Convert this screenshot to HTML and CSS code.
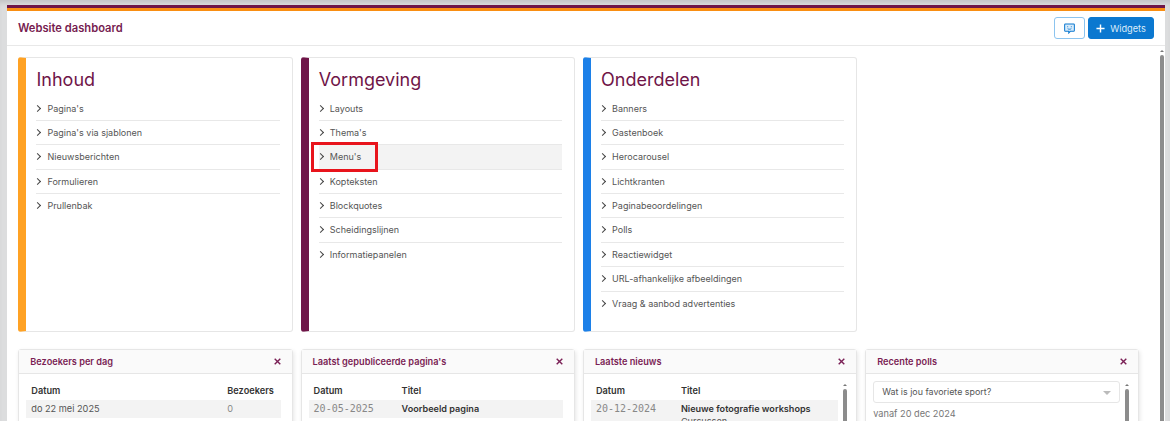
FILE: index.html
```html
<!DOCTYPE html>
<html>
<head>
    <title>Website dashboard</title>
    <link rel="stylesheet" href="styles.css">
</head>
<body>
<div class="shell">
    <div class="stripe-purple"></div>
    <div class="stripe-orange"></div>
    <header class="topbar">
        <h1>Website dashboard</h1>
        <div class="topbar-actions">
            <button class="btn-outline" type="button" aria-label="Feedback">
                <svg width="11" height="11" viewBox="0 0 12 12"><path d="M1.500 1h9a.8.8 0 0 1 .8.8v6.400a.8.8 0 0 1-.8.8H7L5.200 11V9H1.500a.8.8 0 0 1-.8-.8V1.800a.8.8 0 0 1 .8-.8z" fill="#d8ebfa" stroke="#0b78d0" stroke-width="1.100"/><path d="M4 3.600v1M8 3.600v1M4 6.200c1.200.8 2.800.8 4 0" fill="none" stroke="#0b78d0" stroke-width="1"/></svg>
            </button>
            <button class="btn-primary" type="button">
                <svg width="9" height="9" viewBox="0 0 10 10"><path d="M5 .5v9M.5 5h9" stroke="#fff" stroke-width="1.600" fill="none"/></svg>
                Widgets
            </button>
        </div>
    </header>
    <div class="main">
        <div class="content">
            <div class="menu-row">
                <section class="menu-card orange">
                    <h2>Inhoud</h2>
                    <ul>
                        <li>Pagina's</li>
                        <li>Pagina's via sjablonen</li>
                        <li>Nieuwsberichten</li>
                        <li>Formulieren</li>
                        <li>Prullenbak</li>
                    </ul>
                </section>
                <section class="menu-card purple">
                    <h2>Vormgeving</h2>
                    <ul>
                        <li>Layouts</li>
                        <li>Thema's</li>
                        <li class="active">Menu's<span class="marker"></span></li>
                        <li>Kopteksten</li>
                        <li>Blockquotes</li>
                        <li>Scheidingslijnen</li>
                        <li>Informatiepanelen</li>
                    </ul>
                </section>
                <section class="menu-card blue">
                    <h2>Onderdelen</h2>
                    <ul>
                        <li>Banners</li>
                        <li>Gastenboek</li>
                        <li>Herocarousel</li>
                        <li>Lichtkranten</li>
                        <li>Paginabeoordelingen</li>
                        <li>Polls</li>
                        <li>Reactiewidget</li>
                        <li>URL-afhankelijke afbeeldingen</li>
                        <li>Vraag &amp; aanbod advertenties</li>
                    </ul>
                </section>
            </div>
            <div class="widget-row">
                <section class="widget">
                    <div class="widget-head"><h3>Bezoekers per dag</h3><svg class="close" width="7" height="7" viewBox="0 0 7 7"><path d="M.7.7l5.600 5.600M6.300.7L.7 6.300"/></svg></div>
                    <div class="widget-body">
                        <div class="tr th"><span class="col-wide">Datum</span><span>Bezoekers</span></div>
                        <div class="tr shaded"><span class="col-wide">do 22 mei 2025</span><span class="col-count">0</span></div>
                    </div>
                </section>
                <section class="widget">
                    <div class="widget-head"><h3>Laatst gepubliceerde pagina's</h3><svg class="close" width="7" height="7" viewBox="0 0 7 7"><path d="M.7.7l5.600 5.600M6.300.7L.7 6.300"/></svg></div>
                    <div class="widget-body">
                        <div class="tr th"><span class="col-date-long">Datum</span><span>Titel</span></div>
                        <div class="tr shaded"><span class="col-date-long date">20-05-2025</span><strong>Voorbeeld pagina</strong></div>
                    </div>
                </section>
                <section class="widget">
                    <div class="widget-head"><h3>Laatste nieuws</h3><svg class="close" width="7" height="7" viewBox="0 0 7 7"><path d="M.7.7l5.600 5.600M6.300.7L.7 6.300"/></svg></div>
                    <div class="widget-body with-scroll">
                        <div class="scroll-col">
                            <div class="tr th"><span class="col-date">Datum</span><span>Titel</span></div>
                            <div class="tr shaded tall"><span class="col-date date">20-12-2024</span><div><strong>Nieuwe fotografie workshops</strong><div class="sub">Cursussen</div></div></div>
                        </div>
                        <div class="mini-scroll"></div>
                    </div>
                </section>
                <section class="widget">
                    <div class="widget-head"><h3>Recente polls</h3><svg class="close" width="7" height="7" viewBox="0 0 7 7"><path d="M.7.7l5.600 5.600M6.300.7L.7 6.300"/></svg></div>
                    <div class="widget-body with-scroll">
                        <div class="scroll-col">
                            <div class="select">Wat is jou favoriete sport?<span class="caret"></span></div>
                            <p class="since">vanaf 20 dec 2024</p>
                        </div>
                        <div class="mini-scroll"></div>
                    </div>
                </section>
            </div>
        </div>
        <div class="page-scroll"></div>
    </div>
</div>
</body>
</html>
```

FILE: styles.css
```css
html, body {
    margin: 0;
    height: 100%;
    overflow: hidden;
}
body {
    background: #dcddde;
    font-family: Inter, "Liberation Sans", sans-serif;
    font-size: 9px;
    color: #555;
    padding: 5px 5px 0 7px;
    box-sizing: border-box;
    box-shadow: inset 0 5px 4px -2px #c4c5c7;
}
.shell {
    background: #fff;
    height: 416px;
    overflow: hidden;
}
.stripe-purple {
    height: 3px;
    background: #6f1548;
}
.stripe-orange {
    height: 3px;
    background: #f98e12;
}
.topbar {
    height: 34px;
    border-bottom: 1px solid #e8e8e8;
    display: flex;
    align-items: center;
    justify-content: space-between;
    padding: 0 11px;
}
h1 {
    margin: 0;
    font-size: 11.200px;
    font-weight: 600;
    color: #761c50;
}
.topbar-actions {
    display: flex;
    gap: 3px;
}
button {
    height: 22px;
    border-radius: 3px;
    font-family: inherit;
    font-size: 9.200px;
    display: flex;
    align-items: center;
    justify-content: center;
    padding: 0;
}
.btn-outline {
    width: 31px;
    background: #fff;
    border: 1.500px solid #8cc4ef;
}
.btn-primary {
    width: 66px;
    gap: 5px;
    background: #0b78d0;
    border: 1px solid #0b78d0;
    color: #dcecf9;
}
.main {
    display: flex;
}
.content {
    flex: 1;
    padding: 11px 0 0 11.300px;
}
.page-scroll {
    position: relative;
    width: 4px;
    height: 370px;
    margin: 9px 1px 0 0;
    background: #8c8c8c;
    border-radius: 2px 2px 0 0;
}
.page-scroll::before, .mini-scroll::before {
    content: "";
    position: absolute;
    left: 0;
    top: -5px;
    border: 2px solid transparent;
    border-bottom: 2px solid #777;
    border-top: 0;
}
.menu-row, .widget-row {
    display: flex;
    gap: 8px;
}
.menu-card {
    width: 274.300px;
    height: 275px;
    box-sizing: border-box;
    border: 1px solid #e6e6e6;
    border-left-width: 8px;
    border-radius: 3px;
    padding: 0 12px 0 10.200px;
}
.menu-card.orange { border-left-color: #ffa224; }
.menu-card.purple { border-left-color: #6f1548; }
.menu-card.blue { border-left-color: #1c80e8; }
h2 {
    margin: 8px 0 3.500px;
    font-size: 18px;
    line-height: 27px;
    font-weight: 400;
    color: #6f1548;
}
ul {
    list-style: none;
    margin: 0;
    padding: 0;
}
li {
    position: relative;
    height: 24.375px;
    line-height: 24px;
    box-sizing: border-box;
    padding-left: 11px;
    border-bottom: 1px solid #e8e8e8;
}
li:last-child {
    border-bottom: 0;
}
li::before {
    content: "";
    position: absolute;
    left: -1px;
    top: 9px;
    width: 4px;
    height: 4px;
    border-top: 1px solid #444;
    border-right: 1px solid #444;
    transform: rotate(45deg);
}
li.active {
    background: #f3f3f3;
}
.marker {
    position: absolute;
    left: -8px;
    top: -3px;
    width: 61.500px;
    height: 23.500px;
    border: 3px solid #e8141c;
}
.widget-row {
    margin-top: 17px;
}
.widget {
    width: 274.300px;
    height: 80px;
    box-sizing: border-box;
    border: 1px solid #e6e6e6;
    border-radius: 3px;
    box-shadow: 1px 2px 4px rgba(0, 0, 0, .1);
}
.widget-head {
    height: 23px;
    background: #fafafa;
    border-bottom: 1px solid #e6e6e6;
    display: flex;
    align-items: center;
    justify-content: space-between;
    padding: 0 11px;
}
h3 {
    margin: 0;
    font-size: 9.200px;
    font-weight: 600;
    color: #7a1f55;
}
.close {
    fill: none;
    stroke: #7a1f55;
    stroke-width: 1.400;
}
.widget-body {
    padding: 7px 10.500px 7px 7px;
    font-size: 9.200px;
}
.with-scroll {
    display: flex;
    gap: 5px;
    padding-right: 9.500px;
}
.scroll-col {
    flex: 1;
}
.tr {
    display: flex;
    height: 18.500px;
    align-items: center;
    padding: 0 5px;
}
.th {
    font-weight: 600;
    color: #333;
}
.shaded {
    background: #f3f3f3;
}
.tall {
    height: 30px;
    align-items: flex-start;
    padding-top: 3px;
}
.col-wide { width: 196px; }
.col-date { width: 85px; }
.col-date-long { width: 88px; }
.col-count, .date { color: #888; }
.date { font-family: "DejaVu Sans Mono", monospace; font-size: 10px; }
strong { font-weight: 600; color: #333; font-size: 9.100px; }
.sub { margin-top: 2px; }
.mini-scroll {
    position: relative;
    width: 4px;
    margin-top: 8px;
    height: 60px;
    flex: none;
    background: #8c8c8c;
    border-radius: 2px;
}
.select {
    position: relative;
    height: 22px;
    line-height: 20px;
    box-sizing: border-box;
    border: 1px solid #e6e6e6;
    border-radius: 3px;
    padding-left: 8px;
    font-size: 8.900px;
}
.caret {
    position: absolute;
    right: 8px;
    top: 9px;
    border: 4px solid transparent;
    border-top-color: #bbb;
    border-bottom: 0;
}
.since {
    margin: 5px 0 0;
    color: #777;
}
```
